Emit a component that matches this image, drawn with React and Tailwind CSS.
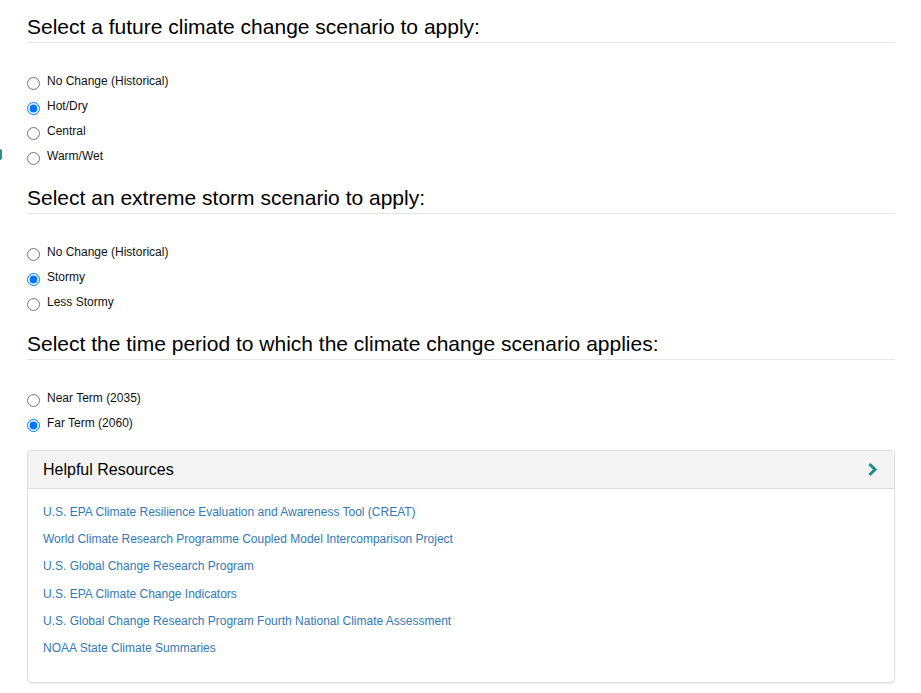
import { useState } from "react";

const climateOptions = ["No Change (Historical)", "Hot/Dry", "Central", "Warm/Wet"];
const stormOptions = ["No Change (Historical)", "Stormy", "Less Stormy"];
const periodOptions = ["Near Term (2035)", "Far Term (2060)"];

const resources = [
  "U.S. EPA Climate Resilience Evaluation and Awareness Tool (CREAT)",
  "World Climate Research Programme Coupled Model Intercomparison Project",
  "U.S. Global Change Research Program",
  "U.S. EPA Climate Change Indicators",
  "U.S. Global Change Research Program Fourth National Climate Assessment",
  "NOAA State Climate Summaries",
];

const RadioGroup = ({ name, options, value, onChange }) => (
  <div className="mt-[25px] flex flex-col">
    {options.map((opt) => (
      <label key={opt} className="flex h-[25px] items-center cursor-pointer">
        <input
          type="radio"
          name={name}
          checked={value === opt}
          onChange={() => onChange(opt)}
          className="m-0 mt-[6px] h-[13px] w-[13px] shrink-0"
        />
        <span className="ml-[7px] mt-[2px] text-[12px] leading-[17px] text-[#111]">{opt}</span>
      </label>
    ))}
  </div>
);

const Heading = ({ children, className = "" }) => (
  <h3
    className={`border-b border-[#e5e5e5] pb-[3px] text-[21px] leading-[24px] font-normal text-black ${className}`}
  >
    {children}
  </h3>
);

export default function App() {
  const [climate, setClimate] = useState("Hot/Dry");
  const [storm, setStorm] = useState("Stormy");
  const [period, setPeriod] = useState("Far Term (2060)");

  return (
    <div
      className="relative min-h-[693px] bg-white pt-[15px] pl-[27px] pr-[26px]"
      style={{ fontFamily: '"Liberation Sans", Arial, sans-serif' }}
    >
      {/* edge of the collapsed side tab */}
      <div className="absolute left-0 top-[149px] h-[11px] w-[2px] rounded-r-full bg-[#2b8e8e]" />

      <Heading>Select a future climate change scenario to apply:</Heading>
      <RadioGroup name="climate" options={climateOptions} value={climate} onChange={setClimate} />

      <Heading className="mt-[18px]">Select an extreme storm scenario to apply:</Heading>
      <RadioGroup name="storm" options={stormOptions} value={storm} onChange={setStorm} />

      <Heading className="mt-[18px]">Select the time period to which the climate change scenario applies:</Heading>
      <RadioGroup name="period" options={periodOptions} value={period} onChange={setPeriod} />

      <div className="mt-[15px] rounded-[4px] border border-[#dddddd] shadow-[0_1px_1px_rgba(0,0,0,0.05)]">
        <div className="flex h-[38px] items-center justify-between rounded-t-[4px] border-b border-[#dddddd] bg-[#f4f4f4] pl-[15px] pr-[16px]">
          <span className="text-[16px] leading-[18px] text-black">Helpful Resources</span>
          <svg width="11" height="15" viewBox="0 0 11 15" fill="none">
            <path d="M2.5 2 L8 7.5 L2.5 13" stroke="#1f8c8c" strokeWidth="3" />
          </svg>
        </div>
        <div className="flex flex-col gap-[10.2px] pt-[15px] pb-[25px] pl-[15px]">
          {resources.map((r) => (
            <a key={r} href="#" className="text-[12px] leading-[17px] text-[#337ab7] hover:underline">
              {r}
            </a>
          ))}
        </div>
      </div>
    </div>
  );
}
